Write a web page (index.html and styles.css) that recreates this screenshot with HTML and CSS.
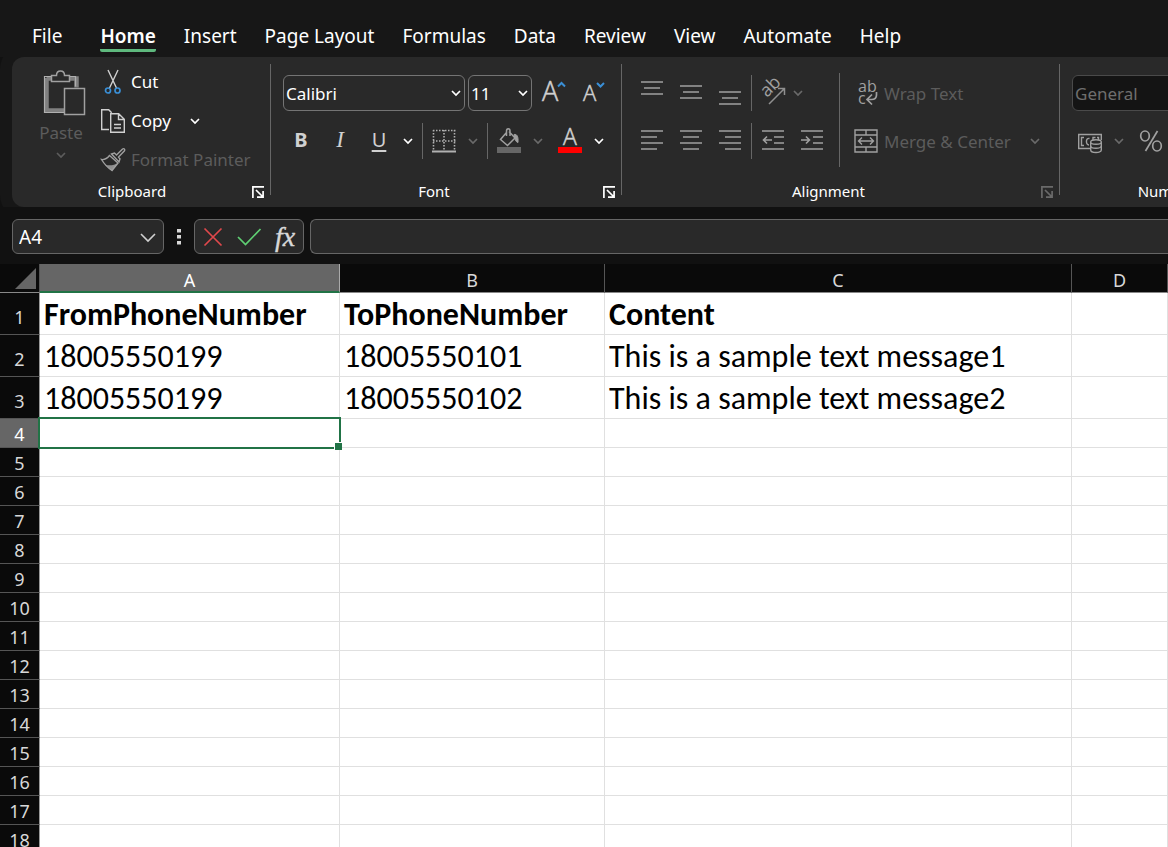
FILE: index.html
```html
<!DOCTYPE html>
<html lang="en">
<head>
<meta charset="utf-8">
<title>Spreadsheet</title>
<link rel="stylesheet" href="styles.css">
</head>
<body>
<svg class="defs" aria-hidden="true">
  <symbol id="chev" viewBox="0 0 12 12"><path d="M2 4l4 4 4-4" fill="none" stroke="currentColor" stroke-width="1.7"/></symbol>
  <symbol id="launch" viewBox="0 0 14 14"><path d="M1.9 13V1.9H13M5 5l7 7M12.1 6v6.1H6" fill="none" stroke="currentColor" stroke-width="1.7"/></symbol>
</svg>
<div class="app">
  <nav class="tabs">
    <button class="tab tab-file">File</button>
    <button class="tab active">Home</button>
    <button class="tab">Insert</button>
    <button class="tab">Page Layout</button>
    <button class="tab">Formulas</button>
    <button class="tab">Data</button>
    <button class="tab">Review</button>
    <button class="tab">View</button>
    <button class="tab">Automate</button>
    <button class="tab">Help</button>
  </nav>

  <div class="ribbon">
    <section class="group clipboard">
      <div class="group-body">
        <button class="paste" disabled>
          <svg width="44" height="48" viewBox="0 0 44 48" fill="none">
            <path d="M3.500 8.500h30v9M3.500 8v32.500h19" stroke="#808080" stroke-width="4.500"/>
            <path d="M1.500 6.500h7M1.500 6v36.500h20M26 6.500h6.500v10" stroke="#b0b0b0" stroke-width="1.200"/>
            <path d="M8.500 11.500v-6h5c0-6 8-6 8 0h5v6z" fill="#292929" stroke="#a0a0a0" stroke-width="1.500"/>
            <rect x="21.500" y="18.500" width="20" height="26" fill="#292929" stroke="#a0a0a0" stroke-width="1.500"/>
          </svg>
          <span>Paste</span>
          <svg class="chev" width="12" height="12"><use href="#chev"/></svg>
        </button>
        <div class="stack">
          <button class="cmd"><span class="ico">
            <svg width="18" height="26" viewBox="0 0 18 26" fill="none"><path d="M4 1l8.500 18M14 1L5.500 19" stroke="#d0d0d0" stroke-width="1.400"/><g stroke="#3a8fd6" stroke-width="1.700"><circle cx="4" cy="21.500" r="2.500"/><circle cx="13.500" cy="21.500" r="2.500"/></g></svg>
          </span>Cut</button>
          <div class="cmd-row">
            <button class="cmd"><span class="ico">
              <svg width="26" height="26" viewBox="0 0 26 26" fill="none" stroke="#d0d0d0" stroke-width="1.400"><path d="M9 21.500H1.700V1.700h7l3 3"/><path d="M10.700 5.700h8l5.600 5.600v13H10.700zM18.500 6v5.500H24M14 16.500h7M14 20h7"/></svg>
            </span>Copy</button>
            <button class="drop wide" aria-label="Copy options"><svg class="chev" width="12" height="12"><use href="#chev"/></svg></button>
          </div>
          <button class="cmd" disabled><span class="ico">
            <svg width="26" height="26" viewBox="0 0 26 26" fill="none" stroke="#a0a0a0" stroke-width="1.400"><path d="M5 17.500c4 1.500 9 1 13-1.500l-6 8z" fill="#909090" stroke="none"/><path d="M9.500 8.500l8.500 7.500-6 7.500C8 21 4 16.500 1.500 12.500c3 .5 6-1.500 8-4z"/><path d="M11.500 7l3-1 2 2 5.800-5.800c1.600-1.400 3.300.3 2 1.900L18.500 10l1.500 2-1 3z"/></svg>
          </span>Format Painter</button>
        </div>
      </div>
      <footer class="group-foot"><span>Clipboard</span><button class="launcher" aria-label="Clipboard settings"><svg width="14" height="14"><use href="#launch"/></svg></button></footer>
    </section>
    <span class="divider"></span>

    <section class="group font">
      <div class="group-body rows">
        <div class="row">
          <label class="pick family"><select aria-label="Font"><option>Calibri</option></select><svg class="chev" width="12" height="12"><use href="#chev"/></svg></label>
          <label class="pick size"><select aria-label="Font size"><option>11</option></select><svg class="chev" width="12" height="12"><use href="#chev"/></svg></label>
          <button class="tool" aria-label="Increase font size"><svg width="28" height="28" viewBox="0 0 28 28"><text x="3" y="22" class="glyph" font-size="27">A</text><path d="M19 7.500l3.500-3.500L26 7.500" fill="none" stroke="#3a8fd6" stroke-width="2"/></svg></button>
          <button class="tool" aria-label="Decrease font size"><svg width="28" height="28" viewBox="0 0 28 28"><text x="5" y="22" class="glyph" font-size="22">A</text><path d="M19 4l3.500 3.500L26 4" fill="none" stroke="#3a8fd6" stroke-width="2"/></svg></button>
        </div>
        <div class="row">
          <button class="tool bold">B</button>
          <button class="tool italic">I</button>
          <div class="split"><button class="tool underline">U</button><button class="drop" aria-label="Underline options"><svg class="chev" width="12" height="12"><use href="#chev"/></svg></button></div>
          <span class="bar"></span>
          <div class="split"><button class="tool" disabled aria-label="Borders"><svg width="24" height="24" viewBox="0 0 24 24" fill="none" stroke="#b0b0b0" stroke-width="1.600"><path d="M1 1.500h23M1 12h23M1.500 1v20M12 1v20M22.500 1v20" stroke-dasharray="1.500 1.500"/><path d="M0 22.500h24" stroke-width="2"/></svg></button><button class="drop" disabled aria-label="Border options"><svg class="chev" width="12" height="12"><use href="#chev"/></svg></button></div>
          <span class="bar"></span>
          <div class="split"><button class="tool" disabled aria-label="Fill color"><svg width="26" height="26" viewBox="0 0 26 26" fill="none" stroke="#a0a0a0" stroke-width="1.500"><path d="M10.500 4.500L4.500 11.500l7 6 7.500-7.500-6-6.500M10.500 8V3c0-3 3.500-3 3.500 0v5"/><path d="M18 6.500c2.500-.5 4.500 1 4 8-3-1-3-4-3-4z" fill="#a0a0a0" stroke-width="1"/><path d="M1 19h24v6H1z" fill="#666" stroke="none"/></svg></button><button class="drop" disabled aria-label="Fill options"><svg class="chev" width="12" height="12"><use href="#chev"/></svg></button></div>
          <div class="split"><button class="tool" aria-label="Font color"><svg width="26" height="26" viewBox="0 0 26 26"><text x="13" y="17" text-anchor="middle" class="glyph" font-size="23">A</text><path d="M1 19h24v6H1z" fill="red"/></svg></button><button class="drop" aria-label="Font color options"><svg class="chev" width="12" height="12"><use href="#chev"/></svg></button></div>
        </div>
      </div>
      <footer class="group-foot"><span>Font</span><button class="launcher" aria-label="Font settings"><svg width="14" height="14"><use href="#launch"/></svg></button></footer>
    </section>
    <span class="divider"></span>

    <section class="group alignment">
      <div class="group-body">
        <div class="rows">
          <div class="row">
            <button class="tool" disabled aria-label="Top align"><svg class="lines" width="22" height="24" viewBox="0 0 22 24"><path d="M0 1h22M3 7h16M0 13h22"/></svg></button>
            <button class="tool" disabled aria-label="Middle align"><svg class="lines" width="22" height="24" viewBox="0 0 22 24"><path d="M0 5h22M3 11h16M0 17h22"/></svg></button>
            <button class="tool" disabled aria-label="Bottom align"><svg class="lines" width="22" height="24" viewBox="0 0 22 24"><path d="M0 11h22M3 17h16M0 23h22"/></svg></button>
            <span class="bar"></span>
            <div class="split"><button class="tool" disabled aria-label="Orientation"><svg width="26" height="26" viewBox="0 0 26 26" fill="none" stroke="#909090" stroke-width="1.500"><text class="letters" transform="translate(7 18) rotate(-45)" font-size="18">ab</text><path d="M9 24L24 9M18 8.500h6.500V15"/></svg></button><button class="drop narrow" disabled aria-label="Orientation options"><svg class="chev" width="12" height="12"><use href="#chev"/></svg></button></div>
          </div>
          <div class="row">
            <button class="tool" disabled aria-label="Align left"><svg class="lines" width="22" height="24" viewBox="0 0 22 24"><path d="M0 2h22M0 8h16M0 14h22M0 20h16"/></svg></button>
            <button class="tool" disabled aria-label="Center"><svg class="lines" width="22" height="24" viewBox="0 0 22 24"><path d="M0 2h22M3 8h16M0 14h22M3 20h16"/></svg></button>
            <button class="tool" disabled aria-label="Align right"><svg class="lines" width="22" height="24" viewBox="0 0 22 24"><path d="M0 2h22M6 8h16M0 14h22M6 20h16"/></svg></button>
            <span class="bar"></span>
            <button class="tool" disabled aria-label="Decrease indent"><svg class="lines" width="22" height="24" viewBox="0 0 22 24"><path d="M0 2h22M12 8h10M12 14h10M0 20h22M1 11h9M5 7.500L1.500 11 5 14.500"/></svg></button>
            <button class="tool" disabled aria-label="Increase indent"><svg class="lines" width="22" height="24" viewBox="0 0 22 24"><path d="M0 2h22M12 8h10M12 14h10M0 20h22M0 11h9M5 7.500L8.500 11 5 14.500"/></svg></button>
          </div>
        </div>
        <span class="tall-bar"></span>
        <div class="rows">
          <button class="cmd" disabled><span class="ico"><svg width="24" height="26" viewBox="0 0 24 26" fill="none" stroke="#a0a0a0" stroke-width="1.700"><text class="letters" x="4" y="12" font-size="16">ab</text><text class="letters" x="4" y="24" font-size="16">c</text><path d="M22.500 12v3c0 3-2 4.500-5 4.500h-3.500M18 14.500l-5 5 5 5"/></svg></span>Wrap Text</button>
          <div class="cmd-row">
            <button class="cmd" disabled><span class="ico"><svg width="24" height="24" viewBox="0 0 24 24" fill="none" stroke="#a0a0a0" stroke-width="1.400"><path d="M1 1h22v22H1zM1 6h22M1 18h22M12 1v5M12 18v5M4.500 12h15M8 8.500L4.500 12 8 15.500M16 8.500l3.500 3.500-3.500 3.500"/></svg></span>Merge &amp; Center</button>
            <button class="drop wide" disabled aria-label="Merge options"><svg class="chev" width="12" height="12"><use href="#chev"/></svg></button>
          </div>
        </div>
      </div>
      <footer class="group-foot"><span>Alignment</span><button class="launcher" disabled aria-label="Alignment settings"><svg width="14" height="14"><use href="#launch"/></svg></button></footer>
    </section>
    <span class="divider"></span>

    <section class="group number">
      <div class="group-body rows">
        <div class="row"><label class="pick format"><select disabled aria-label="Number format"><option>General</option></select></label></div>
        <div class="row">
          <div class="split"><button class="tool" disabled aria-label="Accounting format"><svg width="26" height="24" viewBox="0 0 26 24" fill="none" stroke="#a0a0a0" stroke-width="1.400"><path d="M13 19.500H1.700v-14h22.600V11M7 8.500H4.500v8H7M12.500 9.500c-4-1-4 6.500-.5 6.500M16 11V8.500h2.500M20 8.500h1.500V11"/><path d="M13.700 13v8c0 3.300 10.600 3.300 10.600 0v-8" fill="#292929"/><ellipse cx="19" cy="13" rx="5.300" ry="2.200" fill="#292929"/><path d="M13.700 17c0 3 10.600 3 10.600 0"/></svg></button><button class="drop" disabled aria-label="Accounting options"><svg class="chev" width="12" height="12"><use href="#chev"/></svg></button></div>
          <button class="tool" disabled aria-label="Percent style"><svg width="24" height="24" viewBox="0 0 24 24" fill="none" stroke="#a0a0a0" stroke-width="1.700"><ellipse cx="6" cy="7" rx="4.300" ry="5"/><ellipse cx="18" cy="17" rx="4.300" ry="5"/><path d="M18.500 2l-12 20"/></svg></button>
        </div>
      </div>
      <footer class="group-foot"><span>Number</span></footer>
    </section>
  </div>

  <div class="formula-row">
    <label class="name-box"><input type="text" value="A4" aria-label="Name box"><svg width="18" height="18" viewBox="0 0 18 18" fill="none" stroke="#d0d0d0" stroke-width="1.600"><path d="M2 6l7 7 7-7"/></svg></label>
    <span class="grip"><svg width="4" height="16" viewBox="0 0 4 16" fill="#d8d8d8"><path d="M0 0h4v3.500H0zM0 6h4v3.500H0zM0 12h4v3.500H0z"/></svg></span>
    <div class="entry">
      <button aria-label="Cancel"><svg width="20" height="20" viewBox="0 0 20 20" stroke="#e0484c" stroke-width="1.700"><path d="M1.500 1.500l17 17M18.500 1.500l-17 17"/></svg></button>
      <button aria-label="Enter"><svg width="24" height="18" viewBox="0 0 24 18" fill="none" stroke="#5fcf73" stroke-width="1.700"><path d="M1 9l7.500 7.500L23.500 1"/></svg></button>
      <button class="fx" aria-label="Insert function">fx</button>
    </div>
    <input class="formula" type="text" aria-label="Formula">
  </div>

  <table class="sheet">
    <colgroup><col class="c-num"><col class="c-a"><col class="c-b"><col class="c-c"><col></colgroup>
    <thead><tr><th class="corner"><svg width="21" height="21" viewBox="0 0 21 21"><path d="M21 0v21H0z" fill="#666"/></svg></th><th class="on">A</th><th>B</th><th>C</th><th>D</th></tr></thead>
    <tbody>
      <tr class="big head"><th>1</th><td>FromPhoneNumber</td><td>ToPhoneNumber</td><td>Content</td><td></td></tr>
      <tr class="big"><th>2</th><td>18005550199</td><td>18005550101</td><td>This is a sample text message1</td><td></td></tr>
      <tr class="big"><th>3</th><td>18005550199</td><td>18005550102</td><td>This is a sample text message2</td><td></td></tr>
      <tr><th class="on">4</th><td class="selected"></td><td></td><td></td><td></td></tr>
      <tr><th>5</th><td></td><td></td><td></td><td></td></tr>
      <tr><th>6</th><td></td><td></td><td></td><td></td></tr>
      <tr><th>7</th><td></td><td></td><td></td><td></td></tr>
      <tr><th>8</th><td></td><td></td><td></td><td></td></tr>
      <tr><th>9</th><td></td><td></td><td></td><td></td></tr>
      <tr><th>10</th><td></td><td></td><td></td><td></td></tr>
      <tr><th>11</th><td></td><td></td><td></td><td></td></tr>
      <tr><th>12</th><td></td><td></td><td></td><td></td></tr>
      <tr><th>13</th><td></td><td></td><td></td><td></td></tr>
      <tr><th>14</th><td></td><td></td><td></td><td></td></tr>
      <tr><th>15</th><td></td><td></td><td></td><td></td></tr>
      <tr><th>16</th><td></td><td></td><td></td><td></td></tr>
      <tr><th>17</th><td></td><td></td><td></td><td></td></tr>
      <tr><th>18</th><td></td><td></td><td></td><td></td></tr>
    </tbody>
  </table>
</div>
</body>
</html>
```

FILE: styles.css
```css
* { box-sizing: border-box; }
body {
  margin: 0;
  background: #111;
  color: #fff;
  font-family: "Noto Sans", "Open Sans", sans-serif;
  font-size: 17px;
}
button, input, select {
  margin: 0;
  padding: 0;
  border: 0;
  background: none;
  color: inherit;
  font: inherit;
}
svg { display: block; flex: none; overflow: visible; }
.defs { display: none; }
.app { height: 100vh; overflow: hidden; }

/* Tabs */
.tabs {
  display: flex;
  gap: 28px;
  padding: 20px 32px 5px;
  background: #171717;
}
.tab {
  height: 32px;
  padding-top: 3px;
  border-bottom: 3px solid transparent;
  border-radius: 2px;
  font-size: 19px;
  line-height: 26px;
  white-space: nowrap;
}
.tab-file { margin-right: 10px; }
.tab.active { border-color: #5fb97e; font-weight: 600; }

/* Ribbon */
.ribbon {
  display: flex;
  margin-left: 12px;
  padding-bottom: 3px;
  border-radius: 12px 0 0 12px;
  background: #292929;
  overflow: hidden;
  box-shadow: 0 0 0 12px #171717;
  clip-path: inset(0 0 0 -12px);
}
.group { display: flex; flex: none; flex-direction: column; }
.clipboard { width: 258px; }
.font { width: 350px; }
.alignment { width: 437px; }
.number { width: 214px; }
.divider { flex: none; width: 1px; margin: 7px 0 9px; background: #666; }
.group-body { display: flex; height: 123px; }
.group-foot { display: flex; align-items: center; height: 24px; font-size: 15px; }
.group-foot span { flex: 1; padding-bottom: 2px; text-align: center; }
.clipboard .group-foot { padding-left: 6px; }
.launcher { display: grid; place-items: center; width: 24px; height: 24px; }
.launcher:disabled { color: #6a6a6a; }

.rows { display: flex; flex-direction: column; gap: 12px; padding-top: 18px; }
.font .group-body, .number .group-body, .alignment .group-body { padding-left: 12px; }
.row { display: flex; gap: 3px; }
.split, .cmd-row { display: flex; }
.tool { display: grid; place-items: center; width: 36px; height: 36px; color: #d0d0d0; }
.drop { display: grid; place-items: center; width: 22px; height: 36px; }
.drop.narrow { width: 14px; }
.drop.wide { width: 48px; }
.drop:disabled { color: #6a6a6a; }
.bar { width: 1px; height: 36px; background: #666; }
.tall-bar { width: 1px; height: 94px; margin: 16px 8px 0 9px; background: #666; }
.cmd { display: flex; align-items: center; height: 36px; white-space: nowrap; }
.cmd:disabled, .paste:disabled { color: #5c5c5c; }
.ico { display: grid; place-items: center; width: 36px; }

.clipboard .group-body { padding-left: 24px; }
.paste {
  display: flex;
  flex-direction: column;
  align-items: center;
  width: 50px;
  padding-top: 13px;
}
.paste > svg:first-child { margin-left: 8px; }
.paste span { line-height: 30px; margin-bottom: 1px; }
.stack { padding: 5px 0 0 9px; }
.stack .cmd, .stack .drop { height: 39px; }

.pick { display: grid; align-items: center; }
.pick select {
  grid-area: 1 / 1;
  appearance: none;
  width: 100%;
  height: 36px;
  padding-left: 2px;
  border: 1px solid #747474;
  border-radius: 6px;
  opacity: 1;
}
.pick .chev { grid-area: 1 / 1; justify-self: end; margin-right: 3px; pointer-events: none; }
.family { width: 182px; }
.size { width: 64px; }
.format { width: 180px; color: #6e6e6e; }
.format select { border-color: #4a4a4a; background: #141414; }

.bold { padding-bottom: 3px; font-size: 20px; font-weight: 700; }
.italic { padding-bottom: 2px; font-family: "Liberation Serif", serif; font-size: 23px; font-style: italic; }
.underline { padding-bottom: 3px; font-size: 20px; text-decoration: underline; text-decoration-thickness: 2px; text-underline-offset: 3px; }
.glyph { fill: #d0d0d0; font-family: "Open Sans", sans-serif; font-weight: 300; stroke: #d0d0d0; stroke-width: 0.5; }
.letters { fill: #a0a0a0; stroke: none; font-family: "Open Sans", sans-serif; }
.lines { fill: none; stroke: #a0a0a0; stroke-width: 1.6; }

/* Formula bar */
.formula-row { display: flex; align-items: center; height: 57px; padding: 3px 0 1px 12px; }
.name-box, .entry, .formula {
  height: 35px;
  border: 1px solid #666;
  border-radius: 6px;
  background: #292929;
}
.name-box { display: flex; align-items: center; width: 152px; padding: 0 6px; }
.name-box input { flex: 1; min-width: 0; font-size: 19px; }
.grip { display: grid; place-items: center; width: 30px; }
.entry { display: flex; width: 110px; margin-right: 6px; }
.entry button { display: grid; place-items: center; flex: 1; }
.entry .fx { color: #d8d8d8; font: italic 28px/28px "Liberation Serif", serif; -webkit-text-stroke: 0.4px #d8d8d8; }
.formula { flex: 1; min-width: 0; border-right: 0; border-radius: 6px 0 0 6px; padding: 0 8px; }

/* Sheet */
.sheet {
  width: 100%;
  table-layout: fixed;
  border-collapse: separate;
  border-spacing: 0;
  background: #fff;
  color: #000;
}
.c-num { width: 40px; }
.c-a { width: 300px; }
.c-b { width: 265px; }
.c-c { width: 467px; }
.sheet th, .sheet td { height: 29px; padding: 0; border: solid #e0e0e0; border-width: 0 1px 1px 0; }
.sheet th {
  padding-bottom: 1px;
  border-color: #555;
  background: #0a0a0a;
  color: #d8d8d8;
  font-size: 18px;
  font-weight: 400;
  line-height: 24px;
  vertical-align: bottom;
}
.sheet thead th { padding-bottom: 0; border-bottom-color: #888; }
.sheet tbody th { border-right-color: #999; }
.sheet .corner svg { margin: 0 3px 3px auto; }
.sheet th.on { background: #666; color: #fff; border-right-color: #aaa; }
.sheet thead th.on { border-bottom: 2px solid #217346; line-height: 22px; }
.sheet .big th, .sheet .big td { height: 42px; }
.sheet .big th { padding-bottom: 5px; }
.sheet td {
  padding-left: 4px;
  font-family: Carlito, Calibri, Lato, sans-serif;
  font-size: 32px;
  line-height: 34px;
  white-space: nowrap;
}
.sheet .big td { padding-top: 2px; }
.head td { font-weight: 700; }
.selected { position: relative; }
.selected::before {
  content: "";
  position: absolute;
  inset: -2px;
  border: 2px solid #217346;
}
.selected::after {
  content: "";
  position: absolute;
  right: -3px;
  bottom: -3px;
  width: 7px;
  height: 7px;
  border: solid #fff;
  border-width: 1px 0 0 1px;
  background: #217346;
}
```
